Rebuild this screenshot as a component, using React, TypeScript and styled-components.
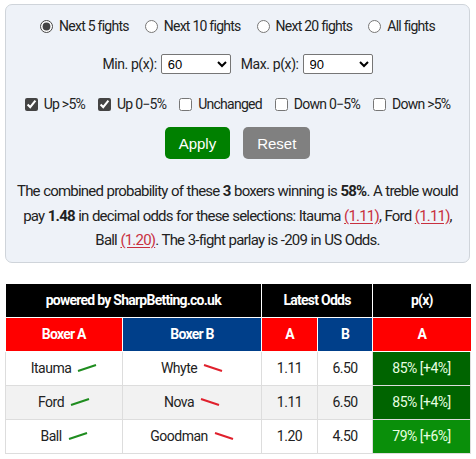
import React, { useState } from 'react';
import styled, { createGlobalStyle } from 'styled-components';

const GlobalStyle = createGlobalStyle`
  body {
    margin: 0;
    background: #ffffff;
    font-family: Roboto, "Liberation Sans", Arial, sans-serif;
    color: #222;
  }
`;

const Page = styled.div`
  padding: 4px 6px 0 5px;
  width: 465px;
`;

const Panel = styled.div`
  background: #eef2f8;
  border: 1px solid #cfd4da;
  border-radius: 7px;
  padding: 13px 8px 9px;
  display: flex;
  flex-direction: column;
  align-items: center;
`;

const Row = styled.div<{ $gap: number; $mt?: number }>`
  display: flex;
  align-items: center;
  justify-content: center;
  gap: ${(p) => p.$gap}px;
  margin-top: ${(p) => p.$mt ?? 0}px;
  font-size: 14px;
  letter-spacing: -0.75px;
  white-space: nowrap;
`;

const Choice = styled.label`
  display: flex;
  align-items: center;
  gap: 6px;
  cursor: pointer;

  input {
    margin: 0;
    width: 13px;
    height: 13px;
    accent-color: #444;
  }
`;

const SelectLabel = styled.label`
  display: flex;
  align-items: center;
  gap: 4px;
  letter-spacing: -0.4px;
`;

const Select = styled.select`
  width: 70px;
  height: 20px;
  font-family: "Liberation Sans", Arial, sans-serif;
  font-size: 13px;
  letter-spacing: 0;
  border: 1px solid #767676;
  border-radius: 2px;
  background: #fff;
  padding: 0 2px;
`;

const Button = styled.button<{ $bg: string }>`
  background: ${(p) => p.$bg};
  color: #fff;
  border: none;
  border-radius: 5px;
  height: 32px;
  padding: 0 14px;
  font-family: "Liberation Sans", Arial, sans-serif;
  font-size: 15px;
  letter-spacing: 0;
  cursor: pointer;
`;

const Summary = styled.p`
  margin: 20px 0 0;
  text-align: center;
  font-size: 15px;
  line-height: 24.5px;
  letter-spacing: -0.8px;
  word-spacing: 0.5px;
  color: #222;

  b {
    font-weight: 700;
  }
`;

const OddsLink = styled.a`
  color: #c8303f;
  text-decoration: underline;
  text-decoration-color: #c8303f;
  text-underline-offset: 2px;
`;

const Table = styled.table`
  margin-top: 21px;
  width: 465px;
  border-collapse: collapse;
  table-layout: fixed;
  font-size: 14px;
  letter-spacing: -0.5px;
`;

const HeadCell = styled.th<{ $bg: string }>`
  background: ${(p) => p.$bg};
  color: #fff;
  height: 33px;
  padding: 0;
  font-weight: 700;
  letter-spacing: -0.75px;
  border: 1px solid #ffffff;
  border-top: none;
  &:first-child {
    border-left: none;
  }
  &:last-child {
    border-right: none;
  }
`;

const BodyRow = styled.tr<{ $alt: boolean }>`
  background: ${(p) => (p.$alt ? '#f2f2f2' : '#ffffff')};
`;

const Cell = styled.td`
  height: 33px;
  padding: 0;
  text-align: center;
  border: 1px solid #dddddd;
  color: #222;
`;

const PxCell = styled.td<{ $bg: string }>`
  height: 33px;
  padding: 0;
  text-align: center;
  background: ${(p) => p.$bg};
  color: #e8ffe0;
  border: 1px solid #dddddd;
`;

const Name = styled.span`
  display: inline-flex;
  align-items: center;
  gap: 6px;
`;

const Trend: React.FC<{ up: boolean }> = ({ up }) => (
  <svg width="20" height="8" viewBox="0 0 20 8">
    {up ? (
      <line x1="1" y1="7" x2="19" y2="1" stroke="#1e8c1e" strokeWidth="2" />
    ) : (
      <line x1="1" y1="1" x2="19" y2="7" stroke="#e0202c" strokeWidth="2" />
    )}
  </svg>
);

const fights = [
  { a: 'Itauma', b: 'Whyte', oa: '1.11', ob: '6.50', px: '85% [+4%]', bg: '#006400' },
  { a: 'Ford', b: 'Nova', oa: '1.11', ob: '6.50', px: '85% [+4%]', bg: '#006400' },
  { a: 'Ball', b: 'Goodman', oa: '1.20', ob: '4.50', px: '79% [+6%]', bg: '#0a8f0a' },
];

const ranges = ['Next 5 fights', 'Next 10 fights', 'Next 20 fights', 'All fights'];
const moves = ['Up >5%', 'Up 0\u22125%', 'Unchanged', 'Down 0\u22125%', 'Down >5%'];

const App: React.FC = () => {
  const [range, setRange] = useState(0);
  const [checked, setChecked] = useState([true, true, false, false, false]);
  const [minP, setMinP] = useState('60');
  const [maxP, setMaxP] = useState('90');

  const pct = ['50', '55', '60', '65', '70', '75', '80', '85', '90', '95'];

  return (
    <>
      <GlobalStyle />
      <Page>
        <Panel>
          <Row $gap={16}>
            {ranges.map((r, i) => (
              <Choice key={r}>
                <input type="radio" name="range" checked={range === i} onChange={() => setRange(i)} />
                {r}
              </Choice>
            ))}
          </Row>
          <Row $gap={10} $mt={20}>
            <SelectLabel>
              Min. p(x):
              <Select value={minP} onChange={(e) => setMinP(e.target.value)}>
                {pct.map((v) => (
                  <option key={v}>{v}</option>
                ))}
              </Select>
            </SelectLabel>
            <SelectLabel>
              Max. p(x):
              <Select value={maxP} onChange={(e) => setMaxP(e.target.value)}>
                {pct.map((v) => (
                  <option key={v}>{v}</option>
                ))}
              </Select>
            </SelectLabel>
          </Row>
          <Row $gap={13} $mt={22}>
            {moves.map((m, i) => (
              <Choice key={m}>
                <input
                  type="checkbox"
                  checked={checked[i]}
                  onChange={() => setChecked(checked.map((c, j) => (j === i ? !c : c)))}
                />
                {m}
              </Choice>
            ))}
          </Row>
          <Row $gap={13} $mt={15}>
            <Button $bg="#008000">Apply</Button>
            <Button $bg="#808080">Reset</Button>
          </Row>
          <Summary>
            The combined probability of these <b>3</b> boxers winning is <b>58%</b>. A treble would pay{' '}
            <b>1.48</b> in decimal odds for these selections: Itauma <OddsLink>(1.11)</OddsLink>, Ford{' '}
            <OddsLink>(1.11)</OddsLink>, Ball <OddsLink>(1.20)</OddsLink>. The 3-fight parlay is -209 in US Odds.
          </Summary>
        </Panel>

        <Table>
          <colgroup>
            <col style={{ width: 117 }} />
            <col style={{ width: 139 }} />
            <col style={{ width: 56 }} />
            <col style={{ width: 55 }} />
            <col style={{ width: 98 }} />
          </colgroup>
          <thead>
            <tr>
              <HeadCell $bg="#000000" colSpan={2}>powered by SharpBetting.co.uk</HeadCell>
              <HeadCell $bg="#000000" colSpan={2}>Latest Odds</HeadCell>
              <HeadCell $bg="#000000">p(x)</HeadCell>
            </tr>
            <tr>
              <HeadCell $bg="#ff0000">Boxer A</HeadCell>
              <HeadCell $bg="#003f8a">Boxer B</HeadCell>
              <HeadCell $bg="#ff0000">A</HeadCell>
              <HeadCell $bg="#003f8a">B</HeadCell>
              <HeadCell $bg="#ff0000">A</HeadCell>
            </tr>
          </thead>
          <tbody>
            {fights.map((f, i) => (
              <BodyRow key={f.a} $alt={i === 1}>
                <Cell>
                  <Name>
                    {f.a} <Trend up />
                  </Name>
                </Cell>
                <Cell>
                  <Name>
                    {f.b} <Trend up={false} />
                  </Name>
                </Cell>
                <Cell>{f.oa}</Cell>
                <Cell>{f.ob}</Cell>
                <PxCell $bg={f.bg}>{f.px}</PxCell>
              </BodyRow>
            ))}
          </tbody>
        </Table>
      </Page>
    </>
  );
};

export default App;
